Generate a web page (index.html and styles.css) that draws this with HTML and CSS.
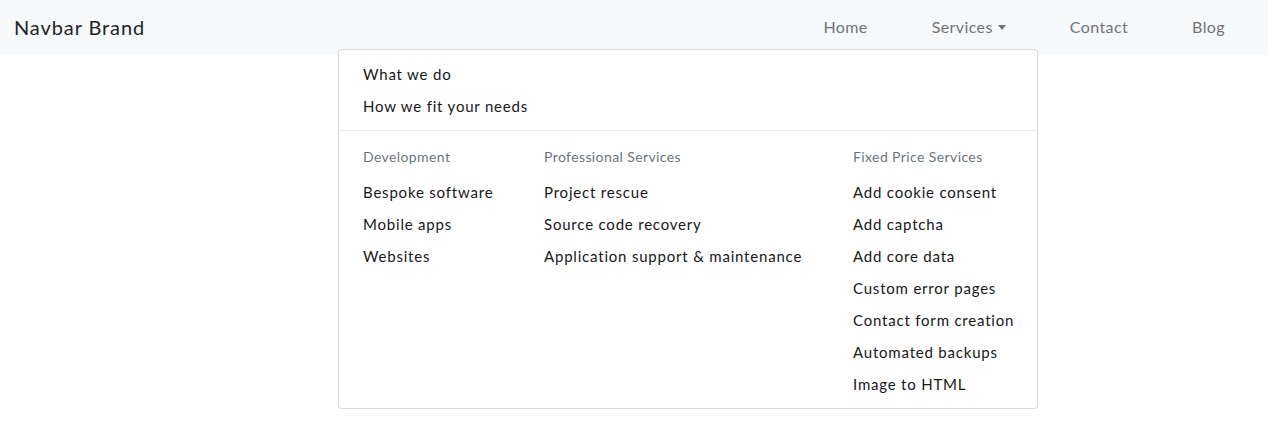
FILE: index.html
```html
<!DOCTYPE html>
<html lang="en">
<head>
  <meta charset="UTF-8">
  <title>Navbar mega menu</title>
  <link rel="stylesheet" href="styles.css">
</head>
<body>

  <!-- NAVBAR -->
  <header class="navbar">
    <a class="brand" href="#">Navbar Brand</a>
    <ul class="nav-links">
      <li><a href="#">Home</a></li>
      <li><a href="#" class="dropdown-toggle">Services</a></li>
      <li><a href="#">Contact</a></li>
      <li><a href="#">Blog</a></li>
    </ul>

    <!-- MEGA DROPDOWN (open) -->
    <div class="mega-menu">
      <div class="menu-top">
        <a href="#" class="menu-item">What we do</a>
        <a href="#" class="menu-item">How we fit your needs</a>
      </div>
      <div class="menu-divider"></div>
      <div class="menu-columns">
        <div class="menu-col">
          <h6 class="menu-header">Development</h6>
          <a href="#" class="menu-item">Bespoke software</a>
          <a href="#" class="menu-item">Mobile apps</a>
          <a href="#" class="menu-item">Websites</a>
        </div>
        <div class="menu-col">
          <h6 class="menu-header">Professional Services</h6>
          <a href="#" class="menu-item">Project rescue</a>
          <a href="#" class="menu-item">Source code recovery</a>
          <a href="#" class="menu-item">Application support &amp; maintenance</a>
        </div>
        <div class="menu-col">
          <h6 class="menu-header">Fixed Price Services</h6>
          <a href="#" class="menu-item">Add cookie consent</a>
          <a href="#" class="menu-item">Add captcha</a>
          <a href="#" class="menu-item">Add core data</a>
          <a href="#" class="menu-item">Custom error pages</a>
          <a href="#" class="menu-item">Contact form creation</a>
          <a href="#" class="menu-item">Automated backups</a>
          <a href="#" class="menu-item">Image to HTML</a>
        </div>
      </div>
    </div>
  </header>

</body>
</html>
```

FILE: styles.css
```css
/* ---------- RESET / BASE ---------- */
* {
  margin: 0;
  padding: 0;
  box-sizing: border-box;
}
html, body {
  min-height: 100%;
}
body {
  min-height: 437px;
  font-family: Lato, "Open Sans", sans-serif;
  background: #fff;
  color: #212529;
}
a {
  text-decoration: none;
  color: inherit;
}
ul {
  list-style: none;
}

/* ---------- NAVBAR ---------- */
.navbar {
  position: relative;
  height: 55px;
  background: #f8f9fa;
  display: flex;
  align-items: center;
  justify-content: space-between;
  padding: 0 11px 0 14px;
}
.brand {
  font-size: 20px;
  letter-spacing: 0.9px;
  color: #212529;
  margin-top: -2px;
}
.nav-links {
  display: flex;
  margin-top: -2px;
}
.nav-links a {
  display: block;
  padding: 0 32px;
  font-size: 16px;
  letter-spacing: 0.4px;
  color: #707478;
}
.dropdown-toggle::after {
  content: "";
  display: inline-block;
  margin-left: 5px;
  vertical-align: 3px;
  border-top: 5px solid #707478;
  border-left: 4px solid transparent;
  border-right: 4px solid transparent;
}

/* ---------- MEGA MENU ---------- */
.mega-menu {
  position: absolute;
  top: 49px;
  left: 338px;
  width: 700px;
  background: #fff;
  border: 1px solid rgba(0, 0, 0, 0.15);
  border-radius: 4px;
  padding: 8px 0;
  z-index: 10;
}
.menu-item {
  display: block;
  height: 32px;
  line-height: 32px;
  font-size: 15px;
  letter-spacing: 0.8px;
  white-space: nowrap;
  color: #16181b;
}
.menu-top .menu-item {
  padding: 0 24px;
}
.menu-divider {
  height: 1px;
  background: #e9ecef;
  margin: 8px 0 0;
}
.menu-columns {
  display: grid;
  grid-template-columns: 181px 309px auto;
  padding: 0 24px;
}
.menu-header {
  font-size: 14px;
  font-weight: normal;
  letter-spacing: 0.4px;
  line-height: 20px;
  color: #6c757d;
  padding-top: 16px;
  margin-bottom: 9px;
}
```
